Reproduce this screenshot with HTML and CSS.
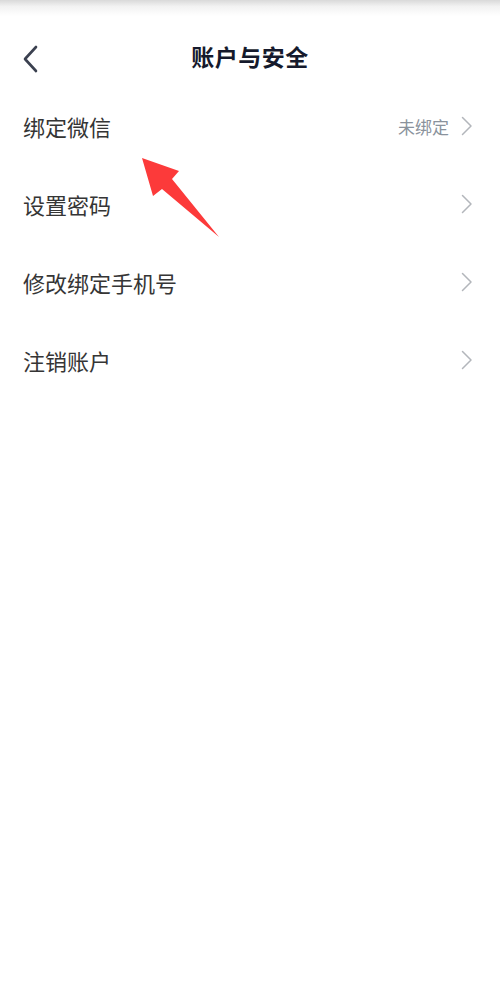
FILE: index.html
```html
<!DOCTYPE html>
<html lang="zh-CN">
<head>
<meta charset="utf-8">
<title>账户与安全</title>
<link rel="stylesheet" href="styles.css">
</head>
<body>
<div class="page">
  <div class="statusbar"></div>
  <header class="header">
    <button class="back" aria-label="返回">
      <svg width="16" height="28" viewBox="0 0 16 28"><path d="M14 2 L3 14 L14 26" fill="none" stroke="#3b4150" stroke-width="2.6" stroke-linecap="round" stroke-linejoin="round"/></svg>
    </button>
    <h1 class="title">账户与安全</h1>
  </header>
  <ul class="list">
    <li class="row">
      <span class="label">绑定微信</span>
      <span class="right"><span class="value">未绑定</span><svg class="chev" width="12" height="20" viewBox="0 0 12 20"><path d="M1.5 1.5 L10 10 L1.5 18.5" fill="none" stroke="#b3b6bb" stroke-width="1.5" stroke-linecap="round" stroke-linejoin="round"/></svg></span>
    </li>
    <li class="row">
      <span class="label">设置密码</span>
      <span class="right"><svg class="chev" width="12" height="20" viewBox="0 0 12 20"><path d="M1.5 1.5 L10 10 L1.5 18.5" fill="none" stroke="#b3b6bb" stroke-width="1.5" stroke-linecap="round" stroke-linejoin="round"/></svg></span>
    </li>
    <li class="row">
      <span class="label">修改绑定手机号</span>
      <span class="right"><svg class="chev" width="12" height="20" viewBox="0 0 12 20"><path d="M1.5 1.5 L10 10 L1.5 18.5" fill="none" stroke="#b3b6bb" stroke-width="1.5" stroke-linecap="round" stroke-linejoin="round"/></svg></span>
    </li>
    <li class="row">
      <span class="label">注销账户</span>
      <span class="right"><svg class="chev" width="12" height="20" viewBox="0 0 12 20"><path d="M1.5 1.5 L10 10 L1.5 18.5" fill="none" stroke="#b3b6bb" stroke-width="1.5" stroke-linecap="round" stroke-linejoin="round"/></svg></span>
    </li>
  </ul>
  <svg class="annot-arrow" width="500" height="1000" viewBox="0 0 500 1000">
    <polygon points="142,158 179,171 172,179 219,237 162,189 153,196" fill="#fc3a3a"/>
  </svg>
</div>
</body>
</html>
```

FILE: styles.css
```css
* { box-sizing: border-box; }
html, body {
  margin: 0;
  padding: 0;
  background: #ffffff;
}
body {
  font-family: "Noto Sans CJK SC", "Noto Sans", sans-serif;
  color: #333333;
}
.page {
  position: relative;
  width: 500px;
  min-height: 1000px;
  background: #ffffff;
}
.statusbar {
  height: 16px;
  background: linear-gradient(#d9d9d9, #f2f2f2 40%, #ffffff);
}
.header {
  position: relative;
  height: 71px;
  padding-top: 8px;
  display: flex;
  align-items: center;
  justify-content: center;
}
.back {
  position: absolute;
  left: 22px;
  top: 29px;
  padding: 0;
  border: 0;
  background: none;
  width: 16px;
  height: 28px;
  display: flex;
}
.title {
  margin: 0;
  font-size: 23px;
  font-weight: 700;
  color: #151a2c;
  letter-spacing: 0.5px;
}
.list {
  list-style: none;
  margin: 0;
  padding: 0;
}
.row {
  height: 78px;
  display: flex;
  align-items: center;
  justify-content: space-between;
  padding: 0 27px 0 23px;
}
.label {
  font-size: 22px;
  color: #353535;
}
.right {
  display: flex;
  align-items: center;
  gap: 12px;
}
.value {
  font-size: 17px;
  color: #8a929c;
}
.chev {
  display: block;
}
.annot-arrow {
  position: absolute;
  left: 0;
  top: 0;
  pointer-events: none;
}
```
